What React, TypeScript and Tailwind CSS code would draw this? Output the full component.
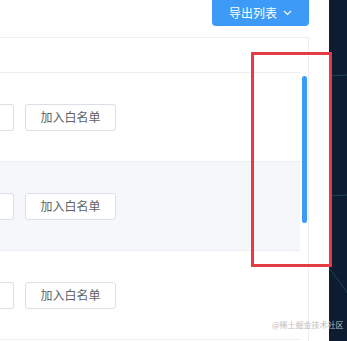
import React from 'react'

const font = { fontFamily: '"Noto Sans CJK SC", "Noto Sans", sans-serif' }

function Row({ striped }: { striped?: boolean }) {
  return (
    <div className={`flex h-[89px] items-center gap-[11px] border-b border-[#ebeef5] ${striped ? 'bg-[#f5f7fa]' : 'bg-white'}`}>
      <div className="h-[27px] w-[14px] rounded-r-[3px] border border-l-0 border-[#dcdfe6] bg-white" />
      <button className="flex h-[27px] w-[91px] items-center justify-center rounded-[3px] border border-[#dcdfe6] bg-white text-[12px] text-[#606266]">
        加入白名单
      </button>
    </div>
  )
}

export default function App() {
  return (
    <div className="relative flex h-[341px] w-[347px] overflow-hidden bg-white" style={font}>
      <div className="flex w-[329px] flex-col">
        {/* 상단 툴바 */}
        <div className="flex h-[37px] w-[309px] justify-end">
          <button className="flex h-[26px] w-[97px] items-center justify-center gap-[6px] rounded-b-[4px] bg-[#3d9bf7] text-[12px] text-white">
            导出列表
            <svg width="9" height="6" viewBox="0 0 9 6" fill="none">
              <path d="M1 1l3.5 3.5L8 1" stroke="white" strokeWidth="1.1" />
            </svg>
          </button>
        </div>

        {/* 테이블 */}
        <div className="relative flex w-[309px] flex-1 border-t border-r border-[#ebeef5]">
          <div className="flex w-[300px] flex-col">
            <div className="h-[35px] shrink-0 border-b border-[#ebeef5]" />
            <Row />
            <Row striped />
            <Row />
          </div>
          <div className="absolute left-[302px] top-[38px] h-[147px] w-[5px] rounded-full bg-[#3d9bf7]" />
        </div>
      </div>

      {/* 오른쪽 어두운 패널 */}
      <div className="relative flex-1 bg-[#0d1c30]">
        <svg className="absolute inset-0" width="18" height="341">
          <line x1="0" y1="76" x2="18" y2="75" stroke="#1d4a55" strokeWidth="1" />
          <line x1="0" y1="196" x2="18" y2="195" stroke="#1d4a55" strokeWidth="1" />
          <line x1="0" y1="268" x2="18" y2="292" stroke="#1a4550" strokeWidth="1" />
        </svg>
      </div>

      {/* 강조 박스 */}
      <div className="absolute left-[251px] top-[52px] h-[215px] w-[81px] border-[3px] border-[#e33d43]" />

      <span className="absolute left-[272px] top-[319px] text-[8px] text-[#b9bcc2]">@稀土掘金技术社区</span>
    </div>
  )
}
